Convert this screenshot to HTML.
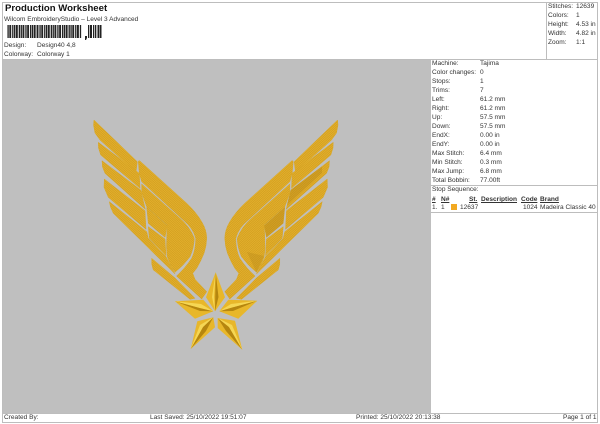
<!DOCTYPE html>
<html><head><meta charset="utf-8"><style>
html,body{margin:0;padding:0;background:#fff}
#p{position:relative;width:600px;height:424px;overflow:hidden;background:#fff;font:6.55px/9px "Liberation Sans",sans-serif;color:#333;filter:blur(.3px)}
#p span{position:absolute;white-space:nowrap}
.l{position:absolute;background:#bdbdbd}
b{font-weight:bold}
u{text-decoration:underline}
</style></head><body><div id="p">
<div style="position:absolute;left:3px;top:59px;width:428px;height:354px;background:#bfbfbf"></div>
<div class="l" style="left:2px;top:2px;width:595px;height:1px"></div>
<div class="l" style="left:2px;top:2px;width:1px;height:420px"></div>
<div class="l" style="left:597px;top:2px;width:1px;height:420px"></div>
<div class="l" style="left:2px;top:422px;width:596px;height:1px"></div>
<div class="l" style="left:3px;top:59px;width:594px;height:1px"></div>
<div class="l" style="left:546px;top:2px;width:1px;height:57px"></div>
<div class="l" style="left:431px;top:185px;width:166px;height:1px"></div>
<div class="l" style="left:431px;top:212px;width:166px;height:1px"></div>
<div class="l" style="left:3px;top:413px;width:594px;height:1px"></div>

<span style="left:5px;top:2px;font:bold 9.6px/14px 'Liberation Sans',sans-serif;color:#111">Production Worksheet</span>
<span style="left:4px;top:15px">Wilcom EmbroideryStudio – Level 3 Advanced</span>
<svg style="position:absolute;left:0;top:20px" width="110" height="24" viewBox="0 0 110 24">
<g fill="#222" transform="translate(6.500 5) scale(.94 1)">
<path d="M1 0h1.400v13H1zM3 0h2v13H3zM6 0h1.400v13H6zM8 0h1.400v13H8zM10 0h2v13h-2zM13 0h1.400v13h-1.400zM15 0h1.400v13h-1.400zM17 0h2v13h-2zM20 0h1.400v13h-1.400zM22 0h2v13h-2zM25 0h1.400v13h-1.400zM27 0h1.400v13h-1.400zM29 0h2v13h-2zM32 0h2v13h-2zM35 0h1.400v13h-1.400zM37 0h2v13h-2zM40 0h1.400v13h-1.400zM42 0h1.400v13h-1.400zM44 0h2v13h-2zM47 0h1.400v13h-1.400zM49 0h1.400v13h-1.400zM51 0h2v13h-2zM54 0h1.400v13h-1.400zM56 0h2v13h-2zM59 0h1.400v13h-1.400zM61 0h1.400v13h-1.400zM63 0h2v13h-2zM66 0h1.400v13h-1.400zM68 0h1.400v13h-1.400zM70 0h2v13h-2zM73 0h1.400v13h-1.400zM75 0h2v13h-2zM78 0h1.400v13h-1.400z"/>
</g>
<path fill="#222" d="M85 16h2v2l-1 2h-1zM88 5h1.300v13H88zM90 5h2v13h-2zM93 5h1.300v13H93zM95 5h1.300v13H95zM97.500 5h2v13h-2zM100 5h1.500v13H100z"/>
</svg>
<span style="left:4px;top:41px">Design:</span><span style="left:37px;top:41px">Design40 4,8</span>
<span style="left:4px;top:50px">Colorway:</span><span style="left:37px;top:50px">Colorway 1</span>

<span style="left:548px;top:2px">Stitches:</span><span style="left:576px;top:2px">12639</span>
<span style="left:548px;top:11px">Colors:</span><span style="left:576px;top:11px">1</span>
<span style="left:548px;top:20px">Height:</span><span style="left:576px;top:20px">4.53 in</span>
<span style="left:548px;top:29px">Width:</span><span style="left:576px;top:29px">4.82 in</span>
<span style="left:548px;top:38px">Zoom:</span><span style="left:576px;top:38px">1:1</span>

<span style="left:432px;top:59px">Machine:</span><span style="left:480px;top:59px">Tajima</span>
<span style="left:432px;top:68px">Color changes:</span><span style="left:480px;top:68px">0</span>
<span style="left:432px;top:77px">Stops:</span><span style="left:480px;top:77px">1</span>
<span style="left:432px;top:86px">Trims:</span><span style="left:480px;top:86px">7</span>
<span style="left:432px;top:95px">Left:</span><span style="left:480px;top:95px">61.2 mm</span>
<span style="left:432px;top:104px">Right:</span><span style="left:480px;top:104px">61.2 mm</span>
<span style="left:432px;top:113px">Up:</span><span style="left:480px;top:113px">57.5 mm</span>
<span style="left:432px;top:122px">Down:</span><span style="left:480px;top:122px">57.5 mm</span>
<span style="left:432px;top:131px">EndX:</span><span style="left:480px;top:131px">0.00 in</span>
<span style="left:432px;top:140px">EndY:</span><span style="left:480px;top:140px">0.00 in</span>
<span style="left:432px;top:149px">Max Stitch:</span><span style="left:480px;top:149px">6.4 mm</span>
<span style="left:432px;top:158px">Min Stitch:</span><span style="left:480px;top:158px">0.3 mm</span>
<span style="left:432px;top:167px">Max Jump:</span><span style="left:480px;top:167px">6.8 mm</span>
<span style="left:432px;top:176px">Total Bobbin:</span><span style="left:480px;top:176px">77.00ft</span>
<span style="left:432px;top:185px">Stop Sequence:</span>
<span style="left:432px;top:195px"><b><u>#</u></b></span><span style="left:441px;top:195px"><b><u>N#</u></b></span>
<span style="left:469px;top:195px"><b><u>St.</u></b></span><span style="left:481px;top:195px"><b><u>Description</u></b></span>
<span style="left:521px;top:195px"><b><u>Code</u></b></span><span style="left:540px;top:195px"><b><u>Brand</u></b></span>
<span style="left:432px;top:203px">1.</span><span style="left:441px;top:203px">1</span>
<div style="position:absolute;left:451px;top:204px;width:6px;height:6px;background:#f2a922"></div>
<span style="left:460px;top:203px">12637</span><span style="left:523px;top:203px">1024</span><span style="left:540px;top:203px">Madeira Classic 40</span>

<span style="left:4px;top:413px">Created By:</span>
<span style="left:150px;top:413px">Last Saved: 25/10/2022 19:51:07</span>
<span style="left:356px;top:413px">Printed: 25/10/2022 20:13:38</span>
<span style="left:563px;top:413px">Page 1 of 1</span>

<svg style="position:absolute;left:0;top:0" width="600" height="424" viewBox="0 0 600 424">
<defs>
<pattern id="st" width="1.600" height="1.600" patternUnits="userSpaceOnUse" patternTransform="rotate(42)">
<rect width="1.600" height="1.600" fill="#e4b02c"/><rect width="1.600" height=".6" fill="#cc9a1e"/>
</pattern>
<g id="wing" fill="url(#st)" stroke="#d9a826" stroke-width=".5" stroke-linejoin="round">
<path d="M94 120L137.300 161.700 136 172.300 100 140 95 133 93.500 125Z"/>
<path d="M98.300 142.300L139.300 173.300 140 188.300 100.700 155 98.500 148Z"/>
<path d="M102 160.700L140.700 190 145.300 209.300 105 173.300 102.500 167Z"/>
<path d="M104.300 179L145 210.700 146 229.300 108.300 197.300 104 187.300Z"/>
<path d="M109.300 201.700L146.700 231.700 148.300 238.300 166 256.700 175 274 113.300 213.300 110.500 207Z"/>
<path d="M138.300 161.700Q139 159.500 141 162L186.700 203.300Q196 212 201.700 221.700 206.700 230 206.700 238.300 206.500 246 204 253.300 201 261 196.700 268.300L192.700 273.300 195 279.300 206.700 291.700 201.700 299 176.500 276Q184.500 269 191.700 258.300 195.700 250 195.700 238.300 193 228 183.300 220L141.700 181.700 139.300 173.300Z"/>
<path d="M141.700 184L180 218.300Q190 227 194.300 238.300 194 248 190 256.700 183 266 175 272.300 170 265 167.300 256.700 166 248 166.700 238.300L167.300 225 146.700 206.700 141.700 193Z"/>
<path d="M146.700 207.300L167.300 225.700 165 237.300 148.300 223.300Z"/>
<path d="M148.300 226.700L165 239 166 255.700 149.300 238.300Z"/>
<path d="M151.700 258.300L175 278 195 298.300 190 299.300 156 272 153.300 270Q151 264 151.700 258.300Z"/>
</g>
</defs>
<use href="#wing"/>
<g transform="translate(431.500 0) scale(-1 1)"><use href="#wing"/></g>
<path d="M322 166.500L290.800 190 287 205 322 173Z" fill="#a87a14" opacity=".3"/>
<path d="M284.800 207.300L264.200 225.700 266.500 237.300 283.200 223.300Z" fill="#a87a14" opacity=".3"/>
<path d="M247 252L264 256 256.500 272.300Z" fill="#a87a14" opacity=".25"/>

<!-- star -->
<g>
<path d="M215.700 272.300L225 297.300 215 311.300 206 297.300Z" fill="#e8b72a"/>
<path d="M215.700 272.300L218.500 297 215 311.300Z" fill="#b5860f"/>
<path d="M215.700 272.300L212 297 215 311.300 214 297Z" fill="#f5d654"/>
<path d="M175 301.300L203.300 299.700 213.300 311.300 195 318.700Z" fill="#e8b72a"/>
<path d="M175 301.300L200 308 213.300 311.300 200 311Z" fill="#b5860f"/>
<path d="M175 301.300L201 304 213.300 311.300 200 308Z" fill="#f5d654"/>
<path d="M257.300 300.700L228.300 299.700 219.300 311.300 238.300 318.700Z" fill="#e8b72a"/>
<path d="M257.300 300.700L232 307.500 219.300 311.300 233 311Z" fill="#b5860f"/>
<path d="M257.300 300.700L231 304 219.300 311.300 232 307.500Z" fill="#f5d654"/>
<path d="M190.700 349L197.300 321.300 213.300 317.300 215 327.300Z" fill="#e8b72a"/>
<path d="M190.700 349L203 327 213.300 317.300 206 331Z" fill="#b5860f"/>
<path d="M190.700 349L200 325 213.300 317.300 203 327Z" fill="#f5d654"/>
<path d="M242.300 349.700L235 320.700 217.700 318 217.700 328Z" fill="#e8b72a"/>
<path d="M242.300 349.700L229 327 217.700 318 226 331Z" fill="#b5860f"/>
<path d="M242.300 349.700L232 325 217.700 318 229 327Z" fill="#f5d654"/>
</g>
</svg>
</div></body></html>
